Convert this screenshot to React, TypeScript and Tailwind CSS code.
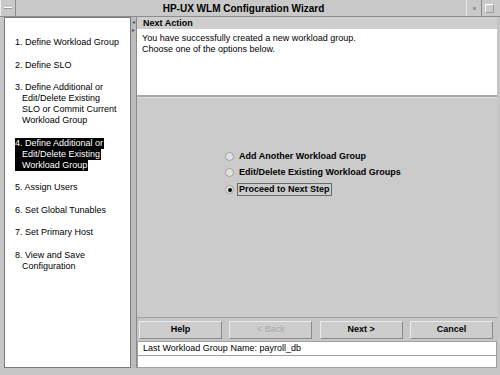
import React from 'react';

const steps: { lines: string[]; active?: boolean }[] = [
  { lines: ['1. Define Workload Group'] },
  { lines: ['2. Define SLO'] },
  { lines: ['3. Define Additional or', 'Edit/Delete Existing', 'SLO or Commit Current', 'Workload Group'] },
  { lines: ['4. Define Additional or', 'Edit/Delete Existing', 'Workload Group'], active: true },
  { lines: ['5. Assign Users'] },
  { lines: ['6. Set Global Tunables'] },
  { lines: ['7. Set Primary Host'] },
  { lines: ['8. View and Save', 'Configuration'] },
];

const options = [
  { label: 'Add Another Workload Group', checked: false },
  { label: 'Edit/Delete Existing Workload Groups', checked: false },
  { label: 'Proceed to Next Step', checked: true },
];

function Radio({ checked }: { checked: boolean }) {
  return (
    <span className="w-[9px] h-[9px] rounded-full border border-[#a0a0a0] bg-[#e2e2e2] flex items-center justify-center shrink-0">
      {checked && <span className="w-[4px] h-[4px] rounded-full bg-black" />}
    </span>
  );
}

function WizButton({ label, disabled }: { label: string; disabled?: boolean }) {
  return (
    <div
      className={`w-[83px] h-[18px] flex items-center justify-center border border-t-[#ececec] border-l-[#ececec] border-b-[#8a8a8a] border-r-[#8a8a8a] bg-[#cdcdcd] text-[9px] ${
        disabled ? 'text-[#a8a8a8]' : 'text-black font-bold'
      }`}
    >
      {label}
    </div>
  );
}

export default function App() {
  return (
    <div
      className="w-[500px] h-[375px] bg-[#c6c6c6] flex flex-col overflow-hidden text-black"
      style={{ fontFamily: '"Liberation Sans", Arial, sans-serif' }}
    >
      {/* title bar */}
      <div className="h-[17px] flex items-stretch border-b border-[#8c8c8c] bg-[#c9c9c9]">
        <div className="w-[16px] flex items-center justify-center border-r border-[#8c8c8c] border-l border-l-[#f0f0f0]">
          <span className="w-[8px] h-[2px] bg-[#9a9a9a] border-t border-white" />
        </div>
        <div className="flex-1 flex items-center justify-center text-[10px] font-bold pl-[5px]">
          HP-UX WLM Configuration Wizard
        </div>
        <div className="w-[15px] flex items-center justify-center border-l border-[#e8e8e8]">
          <span className="w-[3px] h-[3px] bg-[#9a9a9a]" />
        </div>
        <div className="w-[16px] flex items-center justify-center border-l border-[#8c8c8c] mr-[3px]">
          <span className="w-[9px] h-[9px] border border-[#9a9a9a] border-t-white border-l-white" />
        </div>
      </div>

      <div className="h-[354px] flex pl-[4px] pr-[3px] pb-[3px]">
        {/* step list */}
        <div className="w-[127px] bg-white border border-[#7a7a7a] pt-[19px] pl-[10px] flex flex-col gap-[11.5px] text-[9px] leading-[11px] whitespace-nowrap">
          {steps.map((s, i) => (
            <div key={i} className="flex flex-col">
              {s.lines.map((l, j) => (
                <span
                  key={j}
                  className={`w-fit ${j > 0 ? 'pl-[7px]' : ''} ${s.active ? 'bg-black text-white pr-[1px]' : ''}`}
                >
                  {l}
                </span>
              ))}
            </div>
          ))}
        </div>

        {/* splitter */}
        <div className="w-[6px] bg-[#bdbdbd] border-r border-[#8a8a8a] flex flex-col items-center pt-[2px] gap-[2px]">
          <span className="text-[6px] leading-[6px] text-[#555]">◂</span>
          <span className="text-[6px] leading-[6px] text-[#555]">▸</span>
        </div>

        {/* main area */}
        <div className="flex-1 flex flex-col">
          <div className="h-[12px] bg-[#cecece] text-[9px] font-bold leading-[12px] pl-[6px]">Next Action</div>
          <div className="h-[68px] bg-white text-[9px] leading-[11px] pl-[5px] pt-[4px] border-b-2 border-[#a6a6a6]">
            <div>You have successfully created a new workload group.</div>
            <div>Choose one of the options below.</div>
          </div>
          <div className="h-[220px] bg-[#cbcbcb] border-t border-[#e0e0e0] pl-[88px] pt-[53px]">
            <div className="flex flex-col gap-[5px] text-[9px] font-bold leading-[11px]">
              {options.map((o) => (
                <div key={o.label} className="flex items-center gap-[5px]">
                  <Radio checked={o.checked} />
                  <span className={o.checked ? 'border border-[#6a6a6a] px-[1px] -ml-[2px]' : ''}>{o.label}</span>
                </div>
              ))}
            </div>
          </div>
          <div className="h-[24px] flex items-start pt-[3px] justify-between pl-[2px] pr-[4px] border-t border-[#a0a0a0]">
            <WizButton label="Help" />
            <WizButton label="< Back" disabled />
            <WizButton label="Next >" />
            <WizButton label="Cancel" />
          </div>
          <div className="h-[15px] bg-white border border-[#a0a0a0] text-[9px] leading-[13px] pl-[5px]">
            Last Workload Group Name: payroll_db
          </div>
          <div className="flex-1 bg-white border-x border-b border-[#a0a0a0]" />
        </div>
      </div>
    </div>
  );
}
